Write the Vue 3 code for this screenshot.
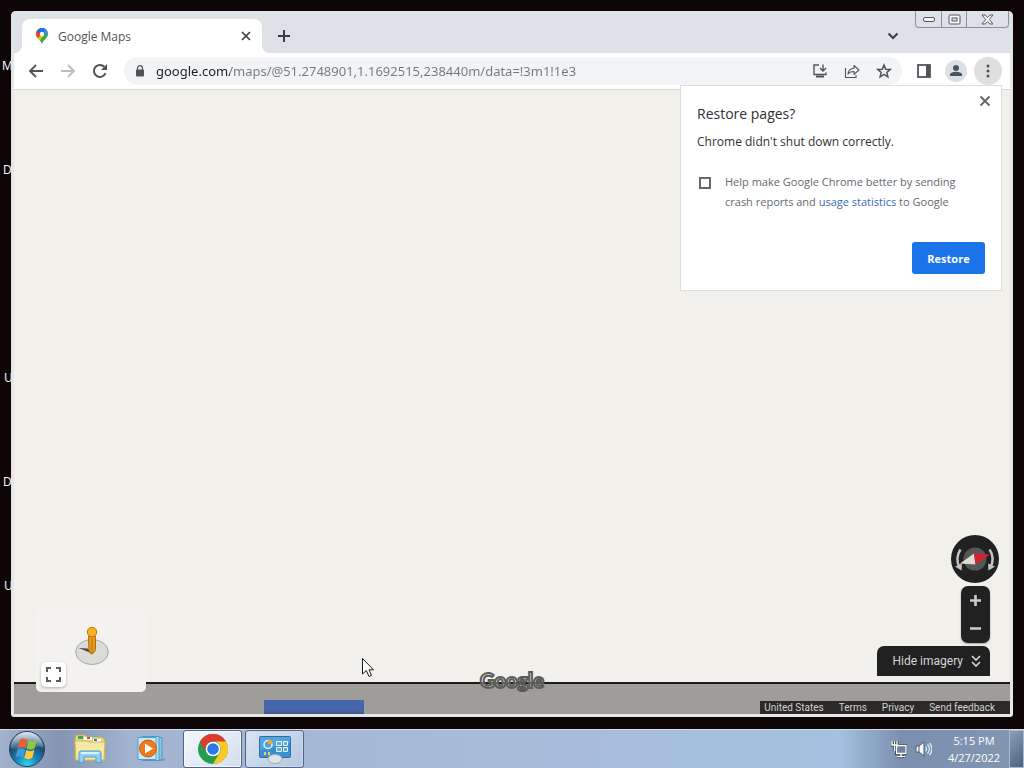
<script setup>
import { ref } from 'vue'

const desktopLabels = [
  { id: 'm', text: 'M', top: 56, left: 2 },
  { id: 'd1', text: 'D', top: 160, left: 3 },
  { id: 'u1', text: 'U', top: 368, left: 4 },
  { id: 'd2', text: 'D', top: 472, left: 3 },
  { id: 'u2', text: 'U', top: 576, left: 4 },
]
const address = ref('google.com/maps/@51.2748901,1.1692515,238440m/data=!3m1!1e3')
const sendReports = ref(false)
const footerLinks = ['United States', 'Terms', 'Privacy', 'Send feedback']
</script>

<template>
  <div class="screen">
    <main class="desktop">
      <span
        v-for="l in desktopLabels"
        :key="l.id"
        class="desk-label"
        :style="{ top: l.top + 'px', left: l.left + 'px' }"
      >{{ l.text }}</span>

      <section class="window">
        <header class="titlebar">
          <div class="tab">
            <svg class="pin" width="14" height="18" viewBox="0 0 14 18">
              <clipPath id="pinclip"><path d="M7 1C3.500 1 1 3.600 1 7c0 4 4.500 5.500 6 10 1.500-4.500 6-6 6-10 0-3.400-2.500-6-6-6z" /></clipPath>
              <g clip-path="url(#pinclip)">
                <path fill="#34a853" d="M0 0h14v18H0z" />
                <path fill="#fbbc04" d="M0 13V8l5-4 4 4-6 8z" />
                <path fill="#ea4335" d="M0 10V3l4 0 3 4-4 4z" />
                <path fill="#1a73e8" d="M2 4l4-5h8v3L7 8z" />
                <path fill="#4285f4" d="M9 0h5v5l-4 3z" />
              </g>
              <circle cx="7" cy="7" r="2.200" fill="#fff" />
            </svg>
            <span class="tab-title">Google Maps</span>
            <button class="icon-btn tab-close" aria-label="Close tab">
              <svg width="10" height="10" viewBox="0 0 10 10"><path d="M1 1l8 8M9 1L1 9" stroke="#3c4043" stroke-width="1.700" /></svg>
            </button>
          </div>
          <button class="icon-btn new-tab" aria-label="New tab">
            <svg width="12" height="12" viewBox="0 0 12 12"><path d="M6 0v12M0 6h12" stroke="#3c4043" stroke-width="2" /></svg>
          </button>
          <button class="icon-btn tab-search" aria-label="Search tabs">
            <svg width="12" height="8" viewBox="0 0 12 8"><path d="M1.500 1.500L6 6l4.500-4.500" fill="none" stroke="#3c4043" stroke-width="2" /></svg>
          </button>
          <div class="caption">
            <button aria-label="Minimize">
              <svg width="14" height="8" viewBox="0 0 14 8"><rect x="1.500" y="2.500" width="11" height="4" rx="1.500" fill="#f6f7f8" stroke="#55595f" /></svg>
            </button>
            <button aria-label="Maximize">
              <svg width="13" height="11" viewBox="0 0 13 11"><rect x="1" y="1" width="11" height="9" rx="1" fill="#f6f7f8" stroke="#55595f" /><rect x="4" y="4" width="5" height="3" fill="#dee1e6" stroke="#55595f" /></svg>
            </button>
            <button class="wide" aria-label="Close">
              <svg width="13" height="11" viewBox="0 0 13 11"><path d="M1 1h3.200l2.300 2.500L8.800 1H12L8.300 5.500 12 10H8.800L6.500 7.500 4.200 10H1l3.700-4.500z" fill="#f6f7f8" stroke="#55595f" /></svg>
            </button>
          </div>
        </header>

        <nav class="toolbar">
          <div class="nav-group">
            <button class="icon-btn" aria-label="Back">
              <svg width="16" height="16" viewBox="0 0 16 16"><path d="M15 8H2M8 2L2 8l6 6" fill="none" stroke="#505458" stroke-width="1.800" /></svg>
            </button>
            <button class="icon-btn" aria-label="Forward">
              <svg width="16" height="16" viewBox="0 0 16 16"><path d="M1 8h13M8 2l6 6-6 6" fill="none" stroke="#bcbfc2" stroke-width="1.800" /></svg>
            </button>
            <button class="icon-btn" aria-label="Reload">
              <svg width="16" height="16" viewBox="0 0 16 16"><path d="M13.500 10.200A6 6 0 1 1 12.300 3.800" fill="none" stroke="#505458" stroke-width="2" /><path d="M15 1v6H9z" fill="#505458" /></svg>
            </button>
          </div>
          <div class="omnibox">
            <svg width="10" height="12" viewBox="0 0 10 12"><rect x="1" y="4.500" width="8" height="7" rx="1" fill="#505458" /><path d="M2.500 5V3.200a2.500 2.500 0 0 1 5 0V5" fill="none" stroke="#505458" stroke-width="1.200" /></svg>
            <input v-model="address" class="address" type="text" aria-label="Address" spellcheck="false" />
            <button class="icon-btn" aria-label="Install app">
              <svg width="16" height="16" viewBox="0 0 16 16"><path d="M7 2H2v9.500h12V9.500" fill="none" stroke="#505458" stroke-width="1.400" /><path d="M4 13.500h8" stroke="#505458" stroke-width="2" /><path d="M11 1.500v6M8 5l3 3 3-3" fill="none" stroke="#505458" stroke-width="1.400" /></svg>
            </button>
            <button class="icon-btn" aria-label="Share">
              <svg width="16" height="16" viewBox="0 0 16 16"><path d="M1.500 5v9.500H12V12" fill="none" stroke="#505458" stroke-width="1.100" /><path d="M4 11c.5-4 2.500-5.500 6-5.700V2.500L15 7l-5 4.300V8.500C7.500 8.500 5.500 9 4 11z" fill="none" stroke="#505458" stroke-width="1.100" stroke-linejoin="round" /></svg>
            </button>
            <button class="icon-btn" aria-label="Bookmark">
              <svg width="16" height="16" viewBox="0 0 16 16"><path d="M8 2l1.700 4.200 4.600.3-3.500 2.900 1.100 4.400L8 11.400l-3.900 2.400 1.100-4.400L1.700 6.500l4.600-.3z" fill="none" stroke="#505458" stroke-width="1.500" /></svg>
            </button>
          </div>
          <div class="nav-group">
            <button class="icon-btn" aria-label="Side panel">
              <svg width="14" height="14" viewBox="0 0 14 14"><rect x="1" y="1" width="12" height="12" fill="none" stroke="#505458" stroke-width="1.800" /><path d="M9 1h4v12H9z" fill="#505458" /></svg>
            </button>
            <button class="icon-btn" aria-label="Profile">
              <svg width="22" height="22" viewBox="0 0 22 22"><circle cx="11" cy="11" r="11" fill="#dcdfe5" /><circle cx="11" cy="8" r="3" fill="#4b5560" /><path d="M5 16v-1.500c0-2 4-2.800 6-2.800s6 .8 6 2.800V16z" fill="#4b5560" /></svg>
            </button>
            <button class="icon-btn active" aria-label="Menu">
              <svg width="4" height="14" viewBox="0 0 4 14" fill="#505458"><circle cx="2" cy="2" r="1.500" /><circle cx="2" cy="7" r="1.500" /><circle cx="2" cy="12" r="1.500" /></svg>
            </button>
          </div>
        </nav>

        <div class="map">
          <div class="imagery"><div class="thumb"></div></div>

          <span class="google">Google</span>

          <div class="minimap">
            <svg class="pegman" width="36" height="42" viewBox="0 0 36 42">
              <ellipse cx="18" cy="27" rx="16.300" ry="12.500" fill="#dbdbd7" stroke="#aaa9a6" />
              <path d="M4.500 23l12.500 5-3-4.500z" fill="#4c4b49" />
              <path d="M14.500 11h7v13.500l-1.500 3L17 29l-2-3z" fill="#e69a17" stroke="#ad6d12" />
              <path d="M18 13v15" stroke="#b97716" />
              <circle cx="18" cy="7" r="4.700" fill="#f9b322" stroke="#b27515" />
            </svg>
            <button class="full" aria-label="Full screen">
              <svg width="15" height="15" viewBox="0 0 15 15"><path d="M1 5V1h4M10 1h4v4M14 10v4h-4M5 14H1v-4" fill="none" stroke="#5c5c5c" stroke-width="2" /></svg>
            </button>
          </div>

          <div class="controls">
            <button class="compass" aria-label="Reset view">
              <svg width="48" height="48" viewBox="0 0 48 48">
                <circle cx="24" cy="24" r="24" fill="#212121" />
                <circle cx="24" cy="24" r="11.500" fill="#565656" />
                <path d="M9 28.500L23 18.500l1.500 11z" fill="#dedbd5" />
                <path d="M39 19.500L23 18.500l1.500 11z" fill="#d5212e" />
                <path d="M9.500 14.500C5.500 20 5.500 27 8.500 32" fill="none" stroke="#c4c4c4" stroke-width="2.500" />
                <path d="M4 31.500l6.500 4 .5-7z" fill="#c4c4c4" />
                <path d="M38.500 14.500C42.500 20 42.500 27 39.500 32" fill="none" stroke="#c4c4c4" stroke-width="2.500" />
                <path d="M44 31.500l-6.500 4-.5-7z" fill="#c4c4c4" />
              </svg>
            </button>
            <div class="zoom">
              <button aria-label="Zoom in"><svg width="11" height="11" viewBox="0 0 11 11"><path d="M5.500 0v11M0 5.500h11" stroke="#c9c9c9" stroke-width="2.600" /></svg></button>
              <button aria-label="Zoom out"><svg width="11" height="11" viewBox="0 0 11 11"><path d="M0 5.500h11" stroke="#c9c9c9" stroke-width="2.600" /></svg></button>
            </div>
            <button class="hide">
              <span>Hide imagery</span>
              <svg width="10" height="12" viewBox="0 0 10 12"><path d="M1 1l4 4 4-4M1 7l4 4 4-4" fill="none" stroke="#d6d6d6" stroke-width="1.600" /></svg>
            </button>
          </div>

          <footer class="links">
            <a v-for="f in footerLinks" :key="f" href="#">{{ f }}</a>
          </footer>
        </div>

        <div class="popup" role="dialog" aria-labelledby="restore-title">
          <button class="icon-btn popup-close" aria-label="Close">
            <svg width="12" height="12" viewBox="0 0 12 12"><path d="M1.500 1.500l9 9M10.500 1.500l-9 9" stroke="#5f6368" stroke-width="1.800" /></svg>
          </button>
          <h1 id="restore-title">Restore pages?</h1>
          <p>Chrome didn't shut down correctly.</p>
          <div class="consent">
            <input id="reports" v-model="sendReports" type="checkbox" />
            <label for="reports">Help make Google Chrome better by sending<br />crash reports and <a href="#">usage statistics</a> to Google</label>
          </div>
          <button class="restore">Restore</button>
        </div>
      </section>

      <svg class="cursor" width="14" height="22" viewBox="0 0 14 22"><path d="M1.500 1.500v15.500l3.800-3.500 2.700 6 2.500-1.100L8 12.800h4.500z" fill="#fff" stroke="#1c1c1c" /></svg>
    </main>

    <footer class="taskbar">
      <button class="start" aria-label="Start">
        <svg width="38" height="38" viewBox="0 0 38 38">
          <defs>
            <radialGradient id="orb" cx=".5" cy=".95" r=".9"><stop offset="0" stop-color="#30d6f5" /><stop offset=".35" stop-color="#1786b8" /><stop offset=".7" stop-color="#1c4a72" /><stop offset="1" stop-color="#7d9db4" /></radialGradient>
            <linearGradient id="gloss" x1="0" y1="0" x2="0" y2="1"><stop offset="0" stop-color="#fff" stop-opacity=".7" /><stop offset="1" stop-color="#fff" stop-opacity=".1" /></linearGradient>
          </defs>
          <circle cx="19" cy="19" r="17.500" fill="url(#orb)" stroke="#26435f" />
          <path d="M3 18a16 16 0 0 1 32 0c-8-4-24 4-32 0z" fill="url(#gloss)" />
          <path d="M12 9.500c3-1.500 5-1 7.500.5l-2 8c-3-1.500-5-1.500-7.700 0z" fill="#e9622b" />
          <path d="M20.700 10.500c3 1.500 5 1.500 8 0l-2 8c-3 1.500-5 1.500-8 0z" fill="#8fc641" />
          <path d="M9.500 19.500c3-1.500 5-1.500 7.700 0l-2 8c-3-1.500-5-1.500-7.700 0z" fill="#3f9be0" />
          <path d="M18.300 20c3 1.500 5 1.500 8 0l-2 8c-3 1.500-5 1.500-8 0z" fill="#fcc934" />
        </svg>
      </button>
      <button class="pinned" aria-label="File Explorer">
        <svg width="34" height="30" viewBox="0 0 34 30">
          <path d="M2 4l1-3h9l2 2h15l3 3v20H2z" fill="#e9d47c" stroke="#c0a752" />
          <path d="M5 2h5v3H5z" fill="#2eaf4b" /><path d="M11 3h8v3h-8z" fill="#fff" /><path d="M14 3h3v2h-3z" fill="#d84a3a" /><path d="M20 5h8v3h-8z" fill="#fff" /><path d="M21 5h3v2h-3z" fill="#3b7dc4" />
          <path d="M2 7h12l2 1h16l-1 18H3z" fill="#f6e9a4" stroke="#cdb868" />
          <path d="M6 28.500V19q0-2 2-2h18q2 0 2 2v9.500h-5V23H11v5.500z" fill="#8fd0ef" stroke="#4fa1cb" />
          <path d="M8 19h18" stroke="#d8f2fd" stroke-width="2" />
        </svg>
      </button>
      <button class="pinned media" aria-label="Media Player">
        <svg width="30" height="28" viewBox="0 0 30 28">
          <path d="M20 26l9-3-2 3z" fill="#7d93b2" />
          <path d="M8 2.500h17v22l-14 1z" fill="#8cc6e6" stroke="#4f9ac4" /><path d="M5 1.500h17v24H5z" fill="#b5def2" stroke="#4f9ac4" /><path d="M1 2.500h18v22H1z" fill="#c9e7f5" stroke="#529dc8" />
          <circle cx="11" cy="13.500" r="8.500" fill="#ee7a1a" stroke="#c85f12" /><path d="M8 8.500v10l8-5z" fill="#fff" />
        </svg>
      </button>
      <button class="task" aria-label="Google Chrome">
        <svg width="30" height="30" viewBox="0 0 30 30">
          <circle cx="15" cy="15" r="15" fill="#249e4c" />
          <path d="M2 7.500A15 15 0 0 1 28 7.500H15a7.500 7.500 0 0 0-6.500 11.200z" fill="#e13b2e" />
          <path d="M28 7.500A15 15 0 0 1 15 30l6.500-11.200A7.500 7.500 0 0 0 15 7.500z" fill="#fbc825" />
          <circle cx="15" cy="15" r="7.300" fill="#fff" /><circle cx="15" cy="15" r="5.800" fill="#2a78ea" />
        </svg>
      </button>
      <button class="task" aria-label="Control Panel">
        <svg width="34" height="30" viewBox="0 0 34 30">
          <rect x="1.500" y="2.500" width="31" height="21" rx="1" fill="#3c8fcd" stroke="#2a6da8" />
          <path d="M2 3h30v6L2 16z" fill="#65b1e2" opacity=".6" />
          <circle cx="10" cy="10.500" r="4" fill="none" stroke="#e4f3fb" stroke-width="1.500" /><path d="M10 10V5.500a4.500 4.500 0 0 1 4.500 4.500z" fill="#f5a62a" />
          <path d="M18.500 7.500h5v4h-5zM25.500 7.500h4v4h-4zM18.500 13.500h5v4h-5zM25.500 13.500h4v4h-4z" fill="#61aee0" stroke="#e4f3fb" />
          <path d="M7 18v3M11 18v3" stroke="#f0cf62" stroke-width="2" />
          <ellipse cx="17" cy="25" rx="7" ry="4.500" fill="#dfe4e8" stroke="#a4adb5" />
        </svg>
      </button>
      <div class="tray">
        <svg width="16" height="18" viewBox="0 0 16 18"><path d="M5.500 5.500H15v8H5.500zM10 14v2M6 16.500h8M1 1v4h5V1M3.500 1v10" fill="none" stroke="#223449" stroke-width="3" /><path d="M5.500 5.500H15v8H5.500zM10 14v2M6 16.500h8" fill="#6d819c" stroke="#fff" stroke-width="1.300" /><path d="M1 1v4h5V1M3.500 1v10" fill="none" stroke="#fff" stroke-width="1.400" /></svg>
        <svg width="17" height="16" viewBox="0 0 17 16"><path d="M1 5h3l5-4v14l-5-4H1z" fill="#f4f7fa" stroke="#4a5c73" /><path d="M4 5v6" stroke="#4a5c73" /><path d="M10.500 5.500q2 2.500 0 5M12.500 3.500q4 4.500 0 9M14.500 2q5 6 0 12" fill="none" stroke="#e9f0f7" stroke-width="1.200" /></svg>
        <button class="clock"><span>5:15 PM</span><span>4/27/2022</span></button>
      </div>
      <button class="show-desktop" aria-label="Show desktop"></button>
    </footer>
  </div>
</template>

<style>
html, body { margin: 0; }
</style>

<style scoped>
.screen, .screen * { box-sizing: border-box; }
.screen {
  display: flex;
  flex-direction: column;
  height: 100vh;
  overflow: hidden;
  background: #0d0506;
  font-family: "Open Sans", "Noto Sans", sans-serif;
}
button {
  border: 0;
  padding: 0;
  background: none;
  font-family: inherit;
  color: inherit;
}
svg { display: block; flex: none; }
.desktop {
  position: relative;
  flex: 1;
  min-height: 0;
  display: flex;
  padding: 11px 11px 12px;
}
.desk-label {
  position: absolute;
  color: #fff;
  font-size: 12px;
  line-height: 20px;
}
.window {
  position: relative;
  flex: 1;
  min-width: 0;
  display: flex;
  flex-direction: column;
  padding: 0 3px 3px;
  border-radius: 5px 5px 3px 3px;
  background: #e6e6e6;
}
.icon-btn {
  display: flex;
  align-items: center;
  justify-content: center;
  flex: none;
  width: 28px;
  height: 28px;
  border-radius: 50%;
}
.titlebar {
  display: flex;
  align-items: flex-end;
  height: 42px;
  margin: 0 -3px;
  padding: 0 4px 0 11px;
  border-radius: 5px 5px 0 0;
  background: #dee1e6;
}
.tab {
  position: relative;
  display: flex;
  align-items: center;
  width: 240px;
  height: 34px;
  padding: 0 2px 0 13px;
  border-radius: 8px 8px 0 0;
  background: #fff;
}
.tab::before, .tab::after {
  content: "";
  position: absolute;
  bottom: 0;
  width: 8px;
  height: 8px;
}
.tab::before { right: 100%; background: radial-gradient(circle at 0 0, transparent 8px, #fff 8px); }
.tab::after { left: 100%; background: radial-gradient(circle at 100% 0, transparent 8px, #fff 8px); }
.tab-title { flex: 1; margin-left: 9px; font-size: 12px; color: #505458; }
.new-tab { margin: 0 0 3px 8px; }
.tab-search { margin: 0 8px 3px auto; }
.caption {
  display: flex;
  align-self: flex-start;
  height: 17px;
  border: 1px solid #8d9299;
  border-top: 0;
  border-radius: 0 0 4px 4px;
}
.caption button {
  display: flex;
  align-items: center;
  justify-content: center;
  width: 25px;
}
.caption button + button { border-left: 1px solid #8d9299; }
.caption .wide { width: 42px; }
.toolbar {
  display: flex;
  align-items: center;
  height: 37px;
  padding: 0 8px;
  border-bottom: 1px solid #d9d9d6;
  background: #fff;
}
.nav-group { display: flex; gap: 4px; }
.active { background: #dfdfe0; }
.omnibox {
  display: flex;
  flex: 1;
  align-items: center;
  gap: 4px;
  height: 28px;
  min-width: 0;
  margin: 0 8px 0 10px;
  padding: 0 4px 0 11px;
  border-radius: 14px;
  background: #f1f3f4;
}
.address {
  flex: 1;
  min-width: 0;
  height: 24px;
  margin-left: 7px;
  padding: 0;
  border: 0;
  outline: 0;
  background: linear-gradient(90deg, #202124 74px, #74787c 74px);
  background-clip: text;
  -webkit-text-fill-color: transparent;
  font-family: "Noto Sans", sans-serif;
  font-size: 13px;
}
.map {
  position: relative;
  flex: 1;
  min-height: 0;
  overflow: hidden;
  background: #f2f0eb;
}
.imagery {
  position: absolute;
  inset: auto 0 0;
  display: flex;
  align-items: flex-end;
  height: 32px;
  border-top: 2px solid #1c1b19;
  background: #9e9d99;
}
.thumb { width: 100px; height: 14px; margin-left: 250px; background: linear-gradient(#4765aa 70%, #405b86); }
.google {
  position: absolute;
  bottom: 20px;
  left: 50%;
  transform: translateX(-50%);
  font-family: Lato, sans-serif;
  font-size: 20px;
  font-weight: 900;
  line-height: 28px;
  color: #ffffff66;
  -webkit-text-stroke: 2px #5b5b58;
}
.minimap {
  position: absolute;
  left: 22px;
  bottom: 22px;
  width: 110px;
  height: 83px;
  border-radius: 5px;
  background: #f4f2ee;
}
.pegman { position: absolute; left: 38px; top: 16px; }
.full {
  position: absolute;
  left: 5px;
  bottom: 5px;
  display: flex;
  align-items: center;
  justify-content: center;
  width: 25px;
  height: 25px;
  border-radius: 5px;
  background: #fff;
  box-shadow: 0 1px 3px #0004;
}
.controls {
  position: absolute;
  right: 11px;
  bottom: 38px;
  display: flex;
  flex-direction: column;
  align-items: flex-end;
  gap: 3px;
}
.compass { width: 48px; height: 48px; border-radius: 50%; }
.zoom {
  display: flex;
  flex-direction: column;
  width: 29px;
  height: 57px;
  margin-right: 9px;
  border-radius: 7px;
  background: #212121;
  box-shadow: 0 1px 2px #0005;
}
.zoom button { display: flex; flex: 1; align-items: center; justify-content: center; }
.hide {
  display: flex;
  align-items: center;
  gap: 8px;
  height: 30px;
  margin-right: 9px;
  padding: 0 9px 0 15px;
  border-radius: 7px 7px 0 0;
  background: #212121;
  color: #d6d6d6;
  font-family: Roboto, sans-serif;
  font-size: 12px;
}
.links {
  position: absolute;
  right: 0;
  bottom: 0;
  display: flex;
  gap: 15px;
  padding: 0 15px 0 4px;
  background: #2b2a28;
  font-family: Roboto, sans-serif;
  font-size: 10px;
  line-height: 13px;
}
.links a { color: #d2d1ce; text-decoration: none; }
.popup {
  position: absolute;
  top: 74px;
  right: 11px;
  display: flex;
  flex-direction: column;
  width: 322px;
  height: 206px;
  padding: 16px;
  border: 1px solid #dddddb;
  background: #fff;
  color: #303236;
}
.popup-close { position: absolute; top: 1px; right: 2px; }
h1 { margin: 0; font-size: 14px; font-weight: 400; line-height: 24px; }
p { margin: 6px 0 0; font-size: 12px; line-height: 20px; }
.consent { display: flex; margin-top: 20px; color: #66696d; }
.consent input {
  appearance: none;
  flex: none;
  width: 12px;
  height: 12px;
  margin: 5px 14px 0 2px;
  border: 2px solid #66696d;
  background: #fff;
}
.consent label { font-size: 11px; line-height: 20px; white-space: nowrap; }
.consent a { color: #3c69b5; text-decoration: none; }
.restore {
  align-self: flex-end;
  width: 73px;
  height: 32px;
  margin-top: auto;
  border-radius: 3px;
  background: #1a73e8;
  color: #fff;
  font-size: 11px;
  font-weight: 700;
}
.cursor { position: absolute; left: 361px; top: 657px; }
.taskbar {
  display: flex;
  align-items: center;
  height: 39px;
  border-top: 1px solid #d3deeb;
  background: linear-gradient(90deg, #a2b3ce 0, #8594b0 60px, #a2b4d0 130px, #a8bbd9 50%, #a3c1e0 82%, #7a90ae 88%, #8396b2 100%);
}
.start { margin-left: 8px; }
.pinned { display: flex; align-items: center; justify-content: center; width: 60px; height: 38px; }
.start + .pinned { margin-left: 14px; }
.media { padding-left: 4px; }
.task {
  display: flex;
  align-items: center;
  justify-content: center;
  width: 59px;
  height: 38px;
  margin-left: 3px;
  border: 1px solid #50658a;
  border-radius: 3px;
  background: linear-gradient(135deg, #f4f8fc, #d3deec);
  box-shadow: inset 0 0 0 1px #f5f8fb;
}
.task + .task { background: linear-gradient(135deg, #d9e4f1, #b5c8e0); box-shadow: inset 0 0 0 1px #ccd9e9; }
.tray { display: flex; align-items: center; gap: 8px; margin-left: auto; }
.clock {
  display: flex;
  flex-direction: column;
  align-items: center;
  width: 68px;
  color: #fff;
  font-size: 11px;
  line-height: 17px;
}
.show-desktop {
  width: 15px;
  height: 38px;
  margin-left: 1px;
  border: 1px solid #a9b8cb;
  background: linear-gradient(135deg, #8d9fb6, #4b607e);
}
</style>
